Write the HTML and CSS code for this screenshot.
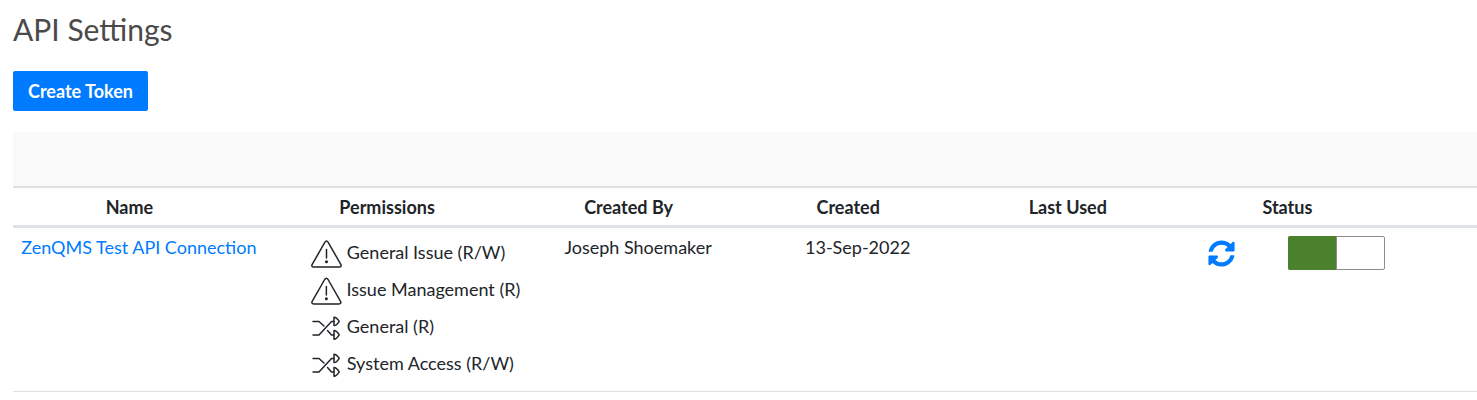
FILE: index.html
```
<!DOCTYPE html>
<html lang="en">
<head>
    <meta charset="UTF-8">
    <meta name="viewport" content="width=device-width, initial-scale=1.0">
    <title>API Settings</title>
    <link rel="stylesheet" href="styles.css">
</head>
<body>
    <svg class="sprite" aria-hidden="true">
        <symbol id="icon-warning" viewBox="0 0 32 28">
            <path d="M13.8 2.4 Q15.5 -0.2 17.2 2.4 L29.8 24.4 Q30.9 27 28.3 27 H2.7 Q0.1 27 1.2 24.4 Z"/>
            <path d="M15.5 9.5 V18"/>
            <circle cx="15.5" cy="21.8" r="0.8"/>
        </symbol>
        <symbol id="icon-shuffle" viewBox="0 0 32 28">
            <path d="M2 7.5 H8 L13 12"/>
            <path d="M2 21 H8 L20.5 7.5 H23"/>
            <path d="M16.5 16.5 L20.5 21 H23"/>
            <path d="M23 3.2 Q25.5 3.2 28.2 7.3 Q25.5 11.6 23 11.6 Z"/>
            <path d="M23 16.6 Q25.5 16.6 28.2 20.8 Q25.5 25.2 23 25.2 Z"/>
        </symbol>
    </svg>

    <main class="page">
        <h1 class="title">API Settings</h1>
        <button class="btn" type="button">Create Token</button>

        <div class="toolbar"></div>
        <table class="tokens">
            <colgroup>
                <col class="col-name">
                <col class="col-permissions">
                <col class="col-data">
                <col class="col-data">
                <col class="col-data">
                <col class="col-data">
                <col>
            </colgroup>
            <thead>
                <tr>
                    <th>Name</th>
                    <th>Permissions</th>
                    <th>Created By</th>
                    <th>Created</th>
                    <th>Last Used</th>
                    <th>Status</th>
                    <th></th>
                </tr>
            </thead>
            <tbody>
                <tr>
                    <td class="name"><a href="#">ZenQMS Test API Connection</a></td>
                    <td>
                        <ul class="permissions">
                            <li><svg class="icon"><use href="#icon-warning"/></svg>General Issue (R/W)</li>
                            <li><svg class="icon"><use href="#icon-warning"/></svg>Issue Management (R)</li>
                            <li><svg class="icon"><use href="#icon-shuffle"/></svg>General (R)</li>
                            <li><svg class="icon"><use href="#icon-shuffle"/></svg>System Access (R/W)</li>
                        </ul>
                    </td>
                    <td>Joseph Shoemaker</td>
                    <td>13-Sep-2022</td>
                    <td></td>
                    <td>
                        <div class="status">
                            <button class="refresh" type="button" aria-label="Regenerate token">
                                <svg viewBox="0 0 512 512"><path d="M370.72 133.28C339.458 104.008 298.888 87.962 255.848 88c-77.458.068-144.328 53.178-162.791 126.85-1.344 5.363-6.122 9.15-11.651 9.15H24.103c-7.498 0-13.194-6.807-11.807-14.176C33.933 94.924 134.813 8 256 8c66.448 0 126.791 26.136 171.315 68.685L463.03 40.97C478.149 25.851 504 36.559 504 57.941V192c0 13.255-10.745 24-24 24H345.941c-21.382 0-32.09-25.851-16.971-40.971l41.75-41.749zM32 296h134.059c21.382 0 32.09 25.851 16.971 40.971l-41.75 41.75c31.262 29.273 71.835 45.319 114.876 45.28 77.418-.07 144.315-53.144 162.787-126.849 1.344-5.363 6.122-9.15 11.651-9.15h57.304c7.498 0 13.194 6.807 11.807 14.176C478.067 417.076 377.187 504 256 504c-66.448 0-126.791-26.136-171.315-68.685L48.97 471.03C33.851 486.149 8 475.441 8 454.059V320c0-13.255 10.745-24 24-24z"/></svg>
                            </button>
                            <input class="toggle" type="checkbox" aria-label="Token active" checked>
                        </div>
                    </td>
                    <td></td>
                </tr>
            </tbody>
        </table>
    </main>
</body>
</html>
```
FILE: styles.css
```
* {
    box-sizing: border-box;
}

body {
    margin: 0;
    font-family: Lato, sans-serif;
    font-size: 18px;
    line-height: 24px;
    color: #212529;
    background: #fff;
}

.sprite {
    display: none;
}

.page {
    padding: 11px 0 8px 13px;
}

.title {
    margin: 0 0 24px;
    font-size: 30px;
    font-weight: 400;
    line-height: 36px;
    color: #4a4a4a;
}

.btn {
    display: block;
    height: 40px;
    padding: 0 15px;
    border: 0;
    border-radius: 2px;
    font: inherit;
    font-weight: 700;
    color: #fff;
    background: #007bff;
    cursor: pointer;
}

.toolbar {
    height: 54px;
    margin-top: 21px;
    background: #f9f9f9;
}

.tokens {
    width: 100%;
    table-layout: fixed;
    border-collapse: separate;
    border-spacing: 0;
    border-top: 2px solid #dee0e2;
    text-align: center;
}

.col-name {
    width: 17.2%;
}

.col-permissions {
    width: 18%;
}

.col-data {
    width: 15%;
}

.tokens th {
    height: 40px;
    padding: 0 27px 0 8px;
    border-bottom: 3px solid #dee2e6;
    font-weight: 700;
}

.tokens td {
    padding: 7px 8px 8px;
    border-bottom: 1px solid #dee2e6;
    vertical-align: top;
}

.name {
    white-space: nowrap;
}

.name a {
    color: #007bff;
    text-decoration: none;
}

.permissions {
    margin: 0;
    padding: 0 0 0 38px;
    list-style: none;
    text-align: left;
    white-space: nowrap;
}

.permissions li {
    display: flex;
    align-items: flex-start;
    gap: 4px;
    height: 37px;
    padding-top: 5px;
}

.icon {
    width: 32px;
    height: 28px;
    fill: none;
    stroke: #212529;
    stroke-width: 1.5;
    stroke-linejoin: round;
    stroke-linecap: round;
}

.status {
    display: flex;
    align-items: center;
    justify-content: center;
    gap: 53px;
    padding-top: 1px;
}

.refresh {
    display: flex;
    padding: 0;
    border: 0;
    background: none;
    cursor: pointer;
}

.refresh svg {
    width: 27px;
    height: 27px;
    fill: #007bff;
}

.toggle {
    appearance: none;
    display: flex;
    width: 97px;
    height: 34px;
    margin: 0;
    border: 1px solid #8c8c8c;
    border-radius: 2px;
    background: #fff;
    cursor: pointer;
}

.toggle:checked::before {
    content: "";
    width: 50%;
    margin: -1px 0 -1px -1px;
    border-radius: 2px 0 0 2px;
    background: #4b812c;
    box-shadow: 1px 0 #8c8c8c;
}
```
